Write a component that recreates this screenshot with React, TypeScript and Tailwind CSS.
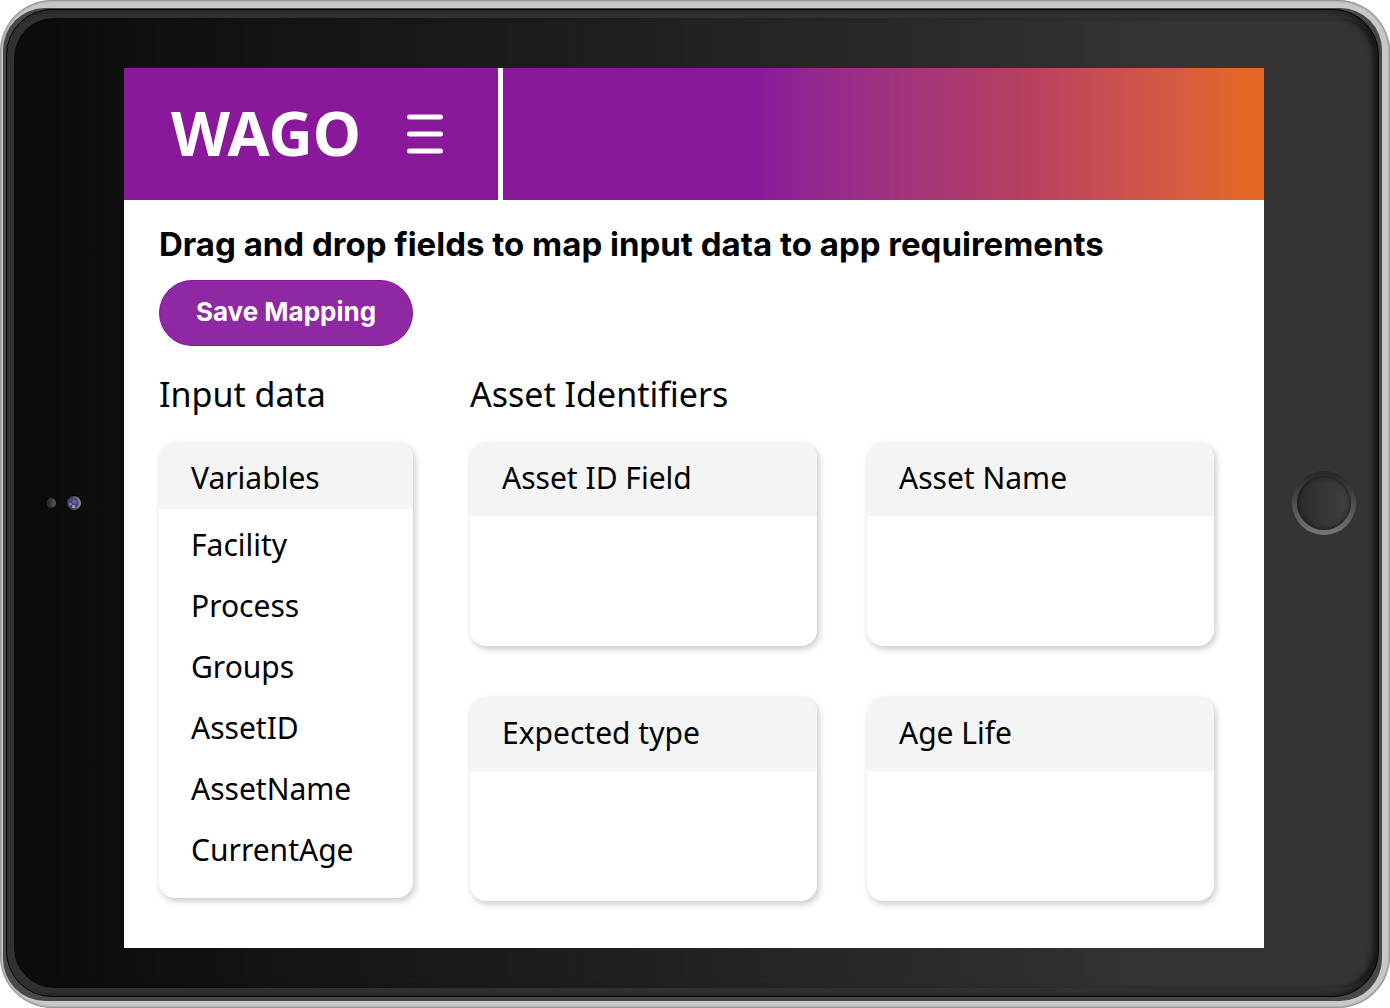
import { useState } from "react";

const variables = ["Facility", "Process", "Groups", "AssetID", "AssetName", "CurrentAge"];
const targets = ["Asset ID Field", "Asset Name", "Expected type", "Age Life"];

const Camera = () => (
    <svg width="40" height="20" viewBox="0 0 40 20" aria-hidden="true">
        <defs>
            <linearGradient id="sensor" x1="0" x2="1">
                <stop offset="0" stopColor="#1c1c1c" />
                <stop offset="1" stopColor="#5a5a5a" />
            </linearGradient>
            <linearGradient id="ring" x1="0" x2="1">
                <stop offset="0.2" stopColor="#3a3a3c" />
                <stop offset="1" stopColor="#8a8a8a" />
            </linearGradient>
        </defs>
        <circle cx="6" cy="10" r="6" fill="#050505" />
        <circle cx="6" cy="10" r="5" fill="url(#sensor)" />
        <circle cx="29" cy="10" r="8" fill="#050505" />
        <circle cx="29" cy="10" r="7" fill="url(#ring)" />
        <circle cx="28" cy="10" r="5.5" fill="#45457f" />
        <path d="M28 6l4 2-2 3-3-2z" fill="#6464a4" />
        <circle cx="25.5" cy="11" r="1.2" fill="#8f8fc4" />
        <circle cx="28.5" cy="13.5" r="1.5" fill="#a9a9d8" />
    </svg>
);

const HomeButton = () => (
    <button
        aria-label="Home"
        className="size-16 rounded-full bg-linear-to-b from-[#262626] to-[#777777] p-[5px]"
    >
        <span className="block size-full rounded-full bg-linear-to-r from-[#2c2b2c] to-[#424142] shadow-[inset_0_0_5px_#111]"></span>
    </button>
);

const DropCard = ({ title, value, onDrop }: any) => {
    return (
        <section
            className="flex flex-col h-[204px] rounded-2xl overflow-hidden bg-white shadow-[2px_3px_7px_rgba(0,0,0,0.22)]"
            onDragOver={(e: any) => e.preventDefault()}
            onDrop={(e: any) => onDrop(title, e.dataTransfer.getData("text"))}
        >
            <h3 className="h-[74px] px-8 bg-[#f4f4f4] leading-[72px]">{title}</h3>
            {value && <p className="px-8 py-4">{value}</p>}
        </section>
    );
};

const App = () => {
    const [mapping, setMapping]: any = useState({});

    const handleDrop = (target: string, field: string) => {
        setMapping({ ...mapping, [target]: field });
    };

    return (
        <div className="min-h-screen flex bg-white font-['Noto_Sans',sans-serif] text-black">
            {/* metal edge, rim and bevel of the tablet */}
            <div className="flex flex-1 rounded-[52px] bg-[#c8c8c8] pt-2 pb-[7px] pl-[3px] pr-2 shadow-[inset_0_0_2px_1px_#858585]">
                <div className="flex flex-1 rounded-[42px] bg-[#484848] pt-px pb-1 pl-[3px] pr-[3px]">
                    <div className="flex flex-1 rounded-[46px] border border-black bg-[#323132] py-2 pl-[7px] shadow-[inset_-6px_0_8px_-2px_#111]">
                        <div className="flex flex-1 items-center rounded-[40px] bg-linear-to-r from-[#0b0b0b] via-[#222222] via-50% to-[#353334] to-85% shadow-[inset_-7px_0_6px_-3px_#111]">
                            <div className="w-[110px] pl-[31px] shrink-0">
                                <Camera />
                            </div>

                            <div className="flex-1 mt-[50px] mb-10 self-stretch bg-white">
                                <header className="flex h-[132px]">
                                    <div className="flex items-center w-[374px] bg-[#8a189a] pl-[47px] gap-x-[45px]">
                                        <a href="#" className="pb-1 font-bold text-[61px] leading-none text-white">
                                            WAGO
                                        </a>
                                        <button aria-label="Menu">
                                            <svg width="38" height="42" viewBox="0 0 38 42" stroke="#fff" strokeWidth="5" strokeLinecap="round">
                                                <path d="M3.5 4h31M3.5 21h31M3.5 38h31" />
                                            </svg>
                                        </button>
                                    </div>
                                    <div className="flex-1 ml-[5px] bg-linear-to-r from-[#8a189a] from-33% via-[#b53d62] via-67% to-[#e46627] to-97%"></div>
                                </header>

                                <main className="pl-[35px] pr-[50px] pt-6 pb-[47px]">
                                    <h1 className="font-['Inter',sans-serif] font-bold text-[33px] leading-10">
                                        Drag and drop fields to map input data to app requirements
                                    </h1>
                                    <button className="mt-4 h-[66px] w-[254px] rounded-full border border-[#8a0f9c] bg-[#8f29a3] pb-1 font-['Inter',sans-serif] font-bold text-[26px] text-white">
                                        Save Mapping
                                    </button>

                                    <div className="mt-6 grid grid-cols-[254px_1fr] gap-x-[57px]">
                                        <h2 className="text-[34px] leading-[48px]">Input data</h2>
                                        <h2 className="text-[34px] leading-[48px]">Asset Identifiers</h2>

                                        <section className="mt-6 h-[456px] rounded-2xl overflow-hidden bg-white text-[30px] shadow-[2px_3px_7px_rgba(0,0,0,0.22)]">
                                            <h3 className="h-[67px] px-8 bg-[#f4f4f4] leading-[72px]">Variables</h3>
                                            <ul className="px-8 pt-[5px]">
                                                {variables.map((name) => (
                                                    <li
                                                        key={name}
                                                        draggable
                                                        onDragStart={(e: any) => e.dataTransfer.setData("text", name)}
                                                        className="leading-[61px] cursor-grab"
                                                    >
                                                        {name}
                                                    </li>
                                                ))}
                                            </ul>
                                        </section>

                                        <div className="mt-6 grid grid-cols-2 content-start gap-x-[50px] gap-y-[51px] text-[30px]">
                                            {targets.map((title) => (
                                                <DropCard
                                                    key={title}
                                                    title={title}
                                                    value={mapping[title]}
                                                    onDrop={handleDrop}
                                                />
                                            ))}
                                        </div>
                                    </div>
                                </main>
                            </div>

                            <div className="flex w-[114px] justify-end pr-[22px] shrink-0">
                                <HomeButton />
                            </div>
                        </div>
                    </div>
                </div>
            </div>
        </div>
    );
};

export default App;
